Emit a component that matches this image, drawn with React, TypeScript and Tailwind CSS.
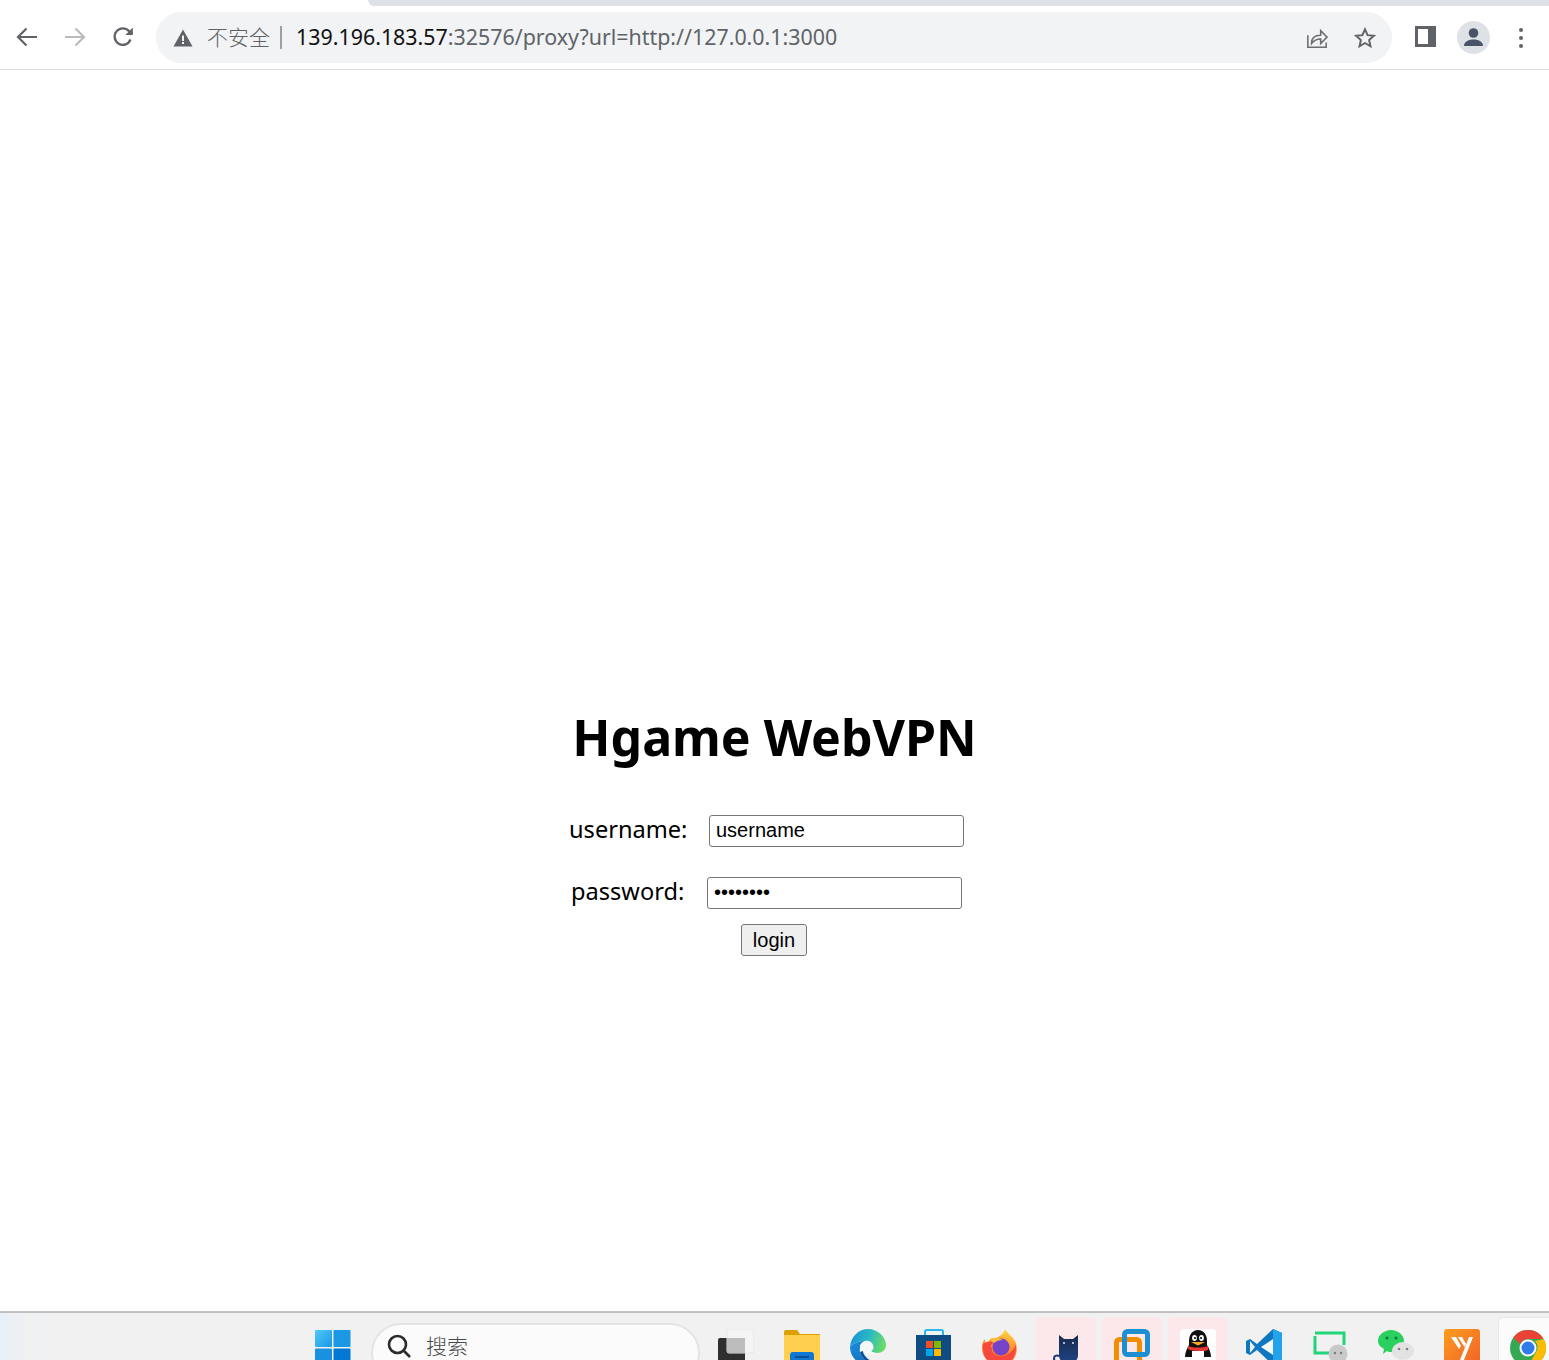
const slotIcons = [
  { key: "taskview", box: "", icon: <TaskViewIcon /> },
  { key: "folder", box: "", icon: <FolderIcon /> },
  { key: "edge", box: "", icon: <EdgeIcon /> },
  { key: "store", box: "", icon: <StoreIcon /> },
  { key: "firefox", box: "", icon: <FirefoxIcon /> },
  { key: "cat", box: "bg-[#fce8ea]", icon: <CatIcon /> },
  { key: "vmware", box: "bg-[#fce8ea]", icon: <VmwareIcon /> },
  { key: "qq", box: "bg-[#fce8ea]", icon: <QQIcon /> },
  { key: "vscode", box: "", icon: <VscodeIcon /> },
  { key: "devtools", box: "", icon: <DevtoolsIcon /> },
  { key: "wechat", box: "", icon: <WechatIcon /> },
  { key: "yuque", box: "", icon: <OrangeIcon /> },
  { key: "chrome", box: "bg-[#fbfbfb] border border-[#e8e8e8]", icon: <ChromeIcon /> },
]

function TaskViewIcon() {
  return (
    <svg width="36" height="36" viewBox="0 0 36 36">
      <rect x="0" y="9" width="27" height="27" rx="2" fill="#2f2f2f" />
      <rect x="9" y="0" width="27" height="24" rx="2" fill="#f4f4f4" stroke="#e6e6e6" />
      <rect x="9" y="9" width="18" height="15" fill="#bdbdbd" />
    </svg>
  )
}

function FolderIcon() {
  return (
    <svg width="36" height="36" viewBox="0 0 36 36">
      <path d="M0 3a2 2 0 0 1 2-2h11l3 4h20v6H0z" fill="#dca000" />
      <path d="M0 6h36v28a2 2 0 0 1-2 2H2a2 2 0 0 1-2-2z" fill="#ffcf4d" />
      <rect x="6" y="23" width="24" height="13" rx="3" fill="#0f78d4" />
      <rect x="11" y="27" width="14" height="2" fill="#0a4f94" />
    </svg>
  )
}

function EdgeIcon() {
  return (
    <svg width="36" height="36" viewBox="0 0 36 36">
      <defs>
        <linearGradient id="edgeA" x1="0" y1="0.3" x2="1" y2="0.5">
          <stop offset="0" stopColor="#1492d6" />
          <stop offset="0.55" stopColor="#2fbcc0" />
          <stop offset="1" stopColor="#6ddc60" />
        </linearGradient>
        <linearGradient id="edgeB" x1="0" y1="0" x2="1" y2="1">
          <stop offset="0" stopColor="#1a8fdc" />
          <stop offset="1" stopColor="#0f67b5" />
        </linearGradient>
      </defs>
      <path d="M0 18C1 7 9 0 18 0c10 0 18 8 18 16 0 5-4 8-9 8-3 0-5-1-6-2 2-1 3-3 2-5-1-3-4-5-8-5-7 0-13 3-15 6z" fill="url(#edgeA)" />
      <path d="M0 18c2-3 8-6 15-6-4 2-6 6-5 11 1 5 6 11 14 13h-6C8 36 0 28 0 18z" fill="url(#edgeB)" />
      <path d="M15 12c4-1 7 1 8 4 1 3 0 5-2 6 1 1 3 2 6 2-4 2-9 2-12 1-3-2-5-5-5-8 0-2 2-4 5-5z" fill="#f4f8f6" />
      <path d="M10 23c1 5 6 11 14 13 4 0 7-2 8-4-6 2-13 0-16-4-2-2-3-4-3-6z" fill="#0b4f9c" />
    </svg>
  )
}

function StoreIcon() {
  return (
    <svg width="36" height="36" viewBox="0 0 36 36">
      <path d="M9 6V3a2 2 0 0 1 2-2h14a2 2 0 0 1 2 2v3" fill="none" stroke="#29b6f0" strokeWidth="2" />
      <path d="M0 6h35v28a2 2 0 0 1-2 2H2a2 2 0 0 1-2-2z" fill="#0f4c81" />
      <rect x="10" y="12" width="7" height="7" fill="#f25022" />
      <rect x="18" y="12" width="7" height="7" fill="#7fba00" />
      <rect x="10" y="20" width="7" height="7" fill="#00a4ef" />
      <rect x="18" y="20" width="7" height="7" fill="#ffb900" />
    </svg>
  )
}

function FirefoxIcon() {
  return (
    <svg width="36" height="36" viewBox="0 0 36 36">
      <defs>
        <linearGradient id="foxA" x1="0.6" y1="0" x2="0.4" y2="1">
          <stop offset="0" stopColor="#ffd83d" />
          <stop offset="0.5" stopColor="#ff8a2b" />
          <stop offset="1" stopColor="#f5483f" />
        </linearGradient>
      </defs>
      <path d="M23 0c2 4 7 7 10 12 4 8 2 24-15 24C7 36 0 28 0 19c0-4 1-7 3-9 0 3 1 4 2 5 1-4 5-5 8-6 4-1 9-4 10-9z" fill="url(#foxA)" />
      <path d="M1 15c4-3 8-3 12-2-5 2-5 5-3 6-1 5 4 10 12 8 7-2 11-8 12-12 1 10-5 21-17 21C8 36 0 28 1 15z" fill="#f5483f" />
      <circle cx="19" cy="18" r="8.5" fill="#7443c9" />
      <path d="M7 10c5-2 10-1 14 1-4 0-7 1-9 3z" fill="#ffbd3d" />
    </svg>
  )
}

function CatIcon() {
  return (
    <svg width="36" height="36" viewBox="0 0 36 36">
      <defs>
        <linearGradient id="catA" x1="0" y1="0" x2="0" y2="1">
          <stop offset="0" stopColor="#1b2a4e" />
          <stop offset="1" stopColor="#1d4280" />
        </linearGradient>
      </defs>
      <path d="M11 26V6l5 4h9l5-4v20c0 4-2 6-4 6H15c-2 0-4-2-4-6z" fill="url(#catA)" />
      <path d="M11 27c-3-1-5 0-5 2.5S8 33 11 33" fill="none" stroke="#1d3a70" strokeWidth="2" />
      <circle cx="16" cy="14" r="1" fill="#dfe6f2" />
      <circle cx="25" cy="14" r="1" fill="#dfe6f2" />
    </svg>
  )
}

function VmwareIcon() {
  return (
    <svg width="36" height="36" viewBox="0 0 36 36">
      <rect x="2.5" y="10.5" width="23" height="23" rx="3" fill="none" stroke="#f28c00" strokeWidth="5" />
      <rect x="10.5" y="2.5" width="23" height="23" rx="3" fill="none" stroke="#1b8fd0" strokeWidth="5" />
    </svg>
  )
}

function QQIcon() {
  return (
    <svg width="36" height="36" viewBox="0 0 36 36">
      <rect width="36" height="36" rx="4" fill="#ffffff" />
      <path d="M18 1c6 0 9 5 9 11v4c2 3 4 8 4 12H5c0-4 2-9 4-12v-4C9 6 12 1 18 1z" fill="#111111" />
      <ellipse cx="14.5" cy="9" rx="2.4" ry="3" fill="#ffffff" />
      <ellipse cx="21.5" cy="9" rx="2.4" ry="3" fill="#ffffff" />
      <circle cx="15" cy="9" r="1.1" fill="#111111" />
      <circle cx="21" cy="9" r="1.1" fill="#111111" />
      <path d="M11 13h14l-7 3.5z" fill="#f9a825" />
      <path d="M8 17c6 2 14 2 20 0v4c-2 1-4 1-6 1v5l-5-2v-3c-4 0-7-1-9-2z" fill="#e53935" />
      <path d="M12 22h12v8H12z" fill="#ffffff" />
    </svg>
  )
}

function VscodeIcon() {
  return (
    <svg width="36" height="36" viewBox="0 0 36 36">
      <path d="M27 0l9 4v28l-9 4-16-15-7 5-4-2v-12l4-2 7 5z" fill="#0f77c0" />
      <path d="M27 0l9 4v28l-9 4z" fill="#23a3ec" />
      <path d="M27 10L15 18l12 8z" fill="#ffffff" opacity="0.95" />
      <path d="M4 12l5 6-5 6z" fill="#f1f1f1" />
    </svg>
  )
}

function DevtoolsIcon() {
  return (
    <svg width="36" height="36" viewBox="0 0 36 36">
      <path d="M18 24H3V7M3 4h29v12" fill="none" stroke="#22d47a" strokeWidth="3" />
      <circle cx="26" cy="25" r="9.5" fill="#c9c9c9" />
      <circle cx="23" cy="24" r="1.2" fill="#7a7a7a" />
      <circle cx="29" cy="24" r="1.2" fill="#7a7a7a" />
    </svg>
  )
}

function WechatIcon() {
  return (
    <svg width="36" height="36" viewBox="0 0 36 36">
      <path d="M13 1c7 0 13 5 13 11s-6 11-13 11c-1 0-3 0-4-1l-4 3 1-5C2 18 0 15 0 12 0 6 6 1 13 1z" fill="#2bd05f" />
      <circle cx="9" cy="9" r="1.6" fill="#0e7a36" />
      <circle cx="18" cy="9" r="1.6" fill="#0e7a36" />
      <ellipse cx="25" cy="22" rx="11" ry="9" fill="#e2e2e2" />
      <circle cx="21" cy="20" r="1.3" fill="#808080" />
      <circle cx="29" cy="20" r="1.3" fill="#808080" />
    </svg>
  )
}

function OrangeIcon() {
  return (
    <svg width="36" height="36" viewBox="0 0 36 36">
      <defs>
        <linearGradient id="orangeA" x1="0" y1="0" x2="1" y2="1">
          <stop offset="0" stopColor="#fb9c1c" />
          <stop offset="1" stopColor="#f2622a" />
        </linearGradient>
      </defs>
      <rect width="36" height="36" rx="3" fill="url(#orangeA)" />
      <path d="M7 8h5l5 9-2 3z" fill="#ffffff" />
      <path d="M14 8h4l4 7-1.5 3z" fill="#ffffff" />
      <path d="M25 8h4l-9 23h-4z" fill="#ffffff" />
    </svg>
  )
}

function ChromeIcon() {
  return (
    <svg width="36" height="36" viewBox="0 0 36 36">
      <circle cx="18" cy="18" r="18" fill="#34a853" />
      <path d="M18 0a18 18 0 0 1 15.6 9H18a9 9 0 0 0-8 5L3.4 7.5A18 18 0 0 1 18 0z" fill="#ea4335" />
      <path d="M33.6 9A18 18 0 0 1 18 36l7.8-13.5A9 9 0 0 0 25 11z" fill="#fbbc04" />
      <circle cx="18" cy="18" r="8.5" fill="#ffffff" />
      <circle cx="18" cy="18" r="6.5" fill="#2f7ce8" />
    </svg>
  )
}

function WindowsLogo() {
  return (
    <svg width="36" height="36" viewBox="0 0 36 36">
      <defs>
        <linearGradient id="winA" x1="0" y1="0" x2="1" y2="1">
          <stop offset="0" stopColor="#4fc8fa" />
          <stop offset="1" stopColor="#1a98e4" />
        </linearGradient>
      </defs>
      <rect x="0" y="0" width="17" height="17" rx="1" fill="url(#winA)" />
      <rect x="18.5" y="0" width="17" height="17" rx="1" fill="#1a98e4" />
      <rect x="0" y="18.5" width="17" height="17" rx="1" fill="#1a90e0" />
      <rect x="18.5" y="18.5" width="17" height="17" rx="1" fill="#0078d4" />
    </svg>
  )
}

function ChromeBar() {
  return (
    <div className="flex h-[64px] items-center border-b border-[#dadce0] bg-white">
      <div className="flex w-[156px] shrink-0 items-center gap-[24px] pl-[15px]">
        <svg width="24" height="24" viewBox="0 0 24 24" fill="none" stroke="#5f6368" strokeWidth="2.2" className="mb-[2px]">
          <path d="M22 12H3M11.5 3.5L3 12l8.5 8.5" />
        </svg>
        <svg width="24" height="24" viewBox="0 0 24 24" fill="none" stroke="#b9bbbd" strokeWidth="2.2" className="mb-[2px]">
          <path d="M2 12h19M12.5 3.5L21 12l-8.5 8.5" />
        </svg>
        <svg width="24" height="24" viewBox="0 0 24 24" fill="none" stroke="#5f6368" strokeWidth="2.3" className="mb-[2px]">
          <path d="M19.5 14.5A8.2 8.2 0 1 1 18 6.2L21 9" />
          <path d="M21.8 2.5V10h-7.5z" fill="#5f6368" stroke="none" />
        </svg>
      </div>
      <div className="flex h-[51px] w-[1236px] shrink-0 items-center rounded-full bg-[#f1f3f4] pr-[16px] pl-[17px]">
        <svg width="20" height="18" viewBox="0 0 20 18" className="shrink-0">
          <path d="M10 0.5L19.5 17.5H0.5z" fill="#5f6368" />
          <rect x="9" y="6.5" width="2" height="5.5" fill="#f1f3f4" />
          <rect x="9" y="13" width="2" height="2" fill="#f1f3f4" />
        </svg>
        <span className="mb-[2px] ml-[14px] font-['Noto_Sans_CJK_SC',sans-serif] text-[21px] leading-none font-light text-[#5f6368]">不安全</span>
        <span className="ml-[10px] h-[23px] w-[2px] bg-[#9aa0a6]" />
        <span className="ml-[14px] font-['Noto_Sans',sans-serif] text-[21.4px] text-[#5f6368]">
          <span className="text-[#111111]">139.196.183.57</span>:32576/proxy?url=http://127.0.0.1:3000
        </span>
        <div className="ml-auto flex items-center gap-[26px]">
          <svg width="22" height="22" viewBox="0 0 24 24" fill="none" stroke="#6b6f73" strokeWidth="1.7">
            <path d="M2 9v13h20v-5" />
            <path d="M6 18c0-6 4-9 10-9V4l7 7-7 7v-5c-4 0-7 1-10 5z" />
          </svg>
          <svg width="22" height="22" viewBox="0 0 24 24" fill="none" stroke="#5f6368" strokeWidth="2.1">
            <path d="M12 2.5l2.8 6.4 6.9.7-5.2 4.6 1.5 6.8-6-3.5-6 3.5 1.5-6.8-5.2-4.6 6.9-.7z" />
          </svg>
        </div>
      </div>
      <div className="ml-[23px] flex items-center">
        <svg width="21" height="21" viewBox="0 0 21 21" className="mb-[2px]">
          <rect width="21" height="21" fill="#5f6368" />
          <rect x="3" y="3" width="10" height="15" fill="#ffffff" />
        </svg>
        <div className="ml-[21px] flex h-[33px] w-[33px] items-center justify-center rounded-full bg-[#dee1e6]">
          <svg width="21" height="21" viewBox="0 0 21 21" fill="#4a5469">
            <circle cx="10.5" cy="6" r="4.8" />
            <path d="M1 19c0-4 4-6.5 9.5-6.5S20 15 20 19z" />
          </svg>
        </div>
        <div className="ml-[29px] flex flex-col gap-[4px]">
          <span className="h-[4px] w-[4px] rounded-full bg-[#5f6368]" />
          <span className="h-[4px] w-[4px] rounded-full bg-[#5f6368]" />
          <span className="h-[4px] w-[4px] rounded-full bg-[#5f6368]" />
        </div>
      </div>
    </div>
  )
}

function LoginForm() {
  return (
    <main className="flex h-[1241px] flex-col items-center bg-white pt-[632px] text-black">
      <h1 className="font-['Noto_Sans',sans-serif] text-[50px] leading-[70px] font-bold">Hgame WebVPN</h1>
      <div className="mt-[43px] mr-[16px] flex h-[32px] items-center">
        <label className="mb-[2px] w-[119px] font-['Noto_Sans',sans-serif] text-[23.6px] whitespace-nowrap">username:</label>
        <input
          readOnly
          defaultValue="username"
          className="ml-[21px] h-[32px] w-[255px] rounded-[3px] border border-[#767676] px-[6px] pb-[2px] font-['Liberation_Sans',sans-serif] text-[20px] text-black outline-none"
        />
      </div>
      <div className="mt-[30px] mr-[16px] flex h-[32px] items-center">
        <label className="mb-[2px] w-[115px] font-['Noto_Sans',sans-serif] text-[23.6px] whitespace-nowrap">password:</label>
        <input
          readOnly
          type="password"
          defaultValue="password"
          className="ml-[21px] h-[32px] w-[255px] rounded-[3px] border border-[#767676] px-[6px] pb-[2px] font-['Liberation_Sans',sans-serif] text-[20px] text-black outline-none"
        />
      </div>
      <button className="mt-[15px] mr-[1px] h-[32px] w-[66px] rounded-[3px] border border-[#767676] bg-[#efefef] pb-[2px] font-['Liberation_Sans',sans-serif] text-[20px] text-black">
        login
      </button>
    </main>
  )
}

function Taskbar() {
  return (
    <footer className="flex h-[49px] items-start overflow-hidden border-t-2 border-[#c0c0c0] bg-gradient-to-r from-[#e8f0f8] via-[#f0f1f2] via-[2%] to-[#f1f1f1] to-[6%] pl-[302px]">
      <div className="flex w-[62px] shrink-0 justify-center pt-[17px]">
        <WindowsLogo />
      </div>
      <div className="mt-[10px] ml-[7px] flex h-[60px] w-[329px] shrink-0 items-start rounded-full border-2 border-[#e4e4e4] bg-[#fbfbfb] pt-[8px] pl-[15px]">
        <svg width="26" height="26" viewBox="0 0 26 26" fill="none" stroke="#2b2b2b" strokeWidth="2.6" className="-ml-[2px]">
          <circle cx="11.5" cy="11.5" r="8.5" />
          <path d="M18 18l6 6" />
        </svg>
        <span className="ml-[14px] font-['Noto_Sans_CJK_SC',sans-serif] text-[21px] leading-[24px] font-light text-[#4a4a4a]">搜索</span>
      </div>
      <div className="ml-[6px] flex shrink-0 gap-[6px]">
        {slotIcons.map((s) => (
          <div key={s.key} className={`mt-[4px] flex h-[60px] w-[60px] shrink-0 justify-center rounded-[5px] pt-[12px] ${s.box}`}>
            {s.icon}
          </div>
        ))}
      </div>
    </footer>
  )
}

export default function App() {
  return (
    <div className="h-[1360px] overflow-hidden bg-white">
      <div className="h-[6px] bg-white pl-[368px]">
        <div className="h-[6px] rounded-bl-[8px] bg-[#dee1e6]" />
      </div>
      <ChromeBar />
      <LoginForm />
      <Taskbar />
    </div>
  )
}
